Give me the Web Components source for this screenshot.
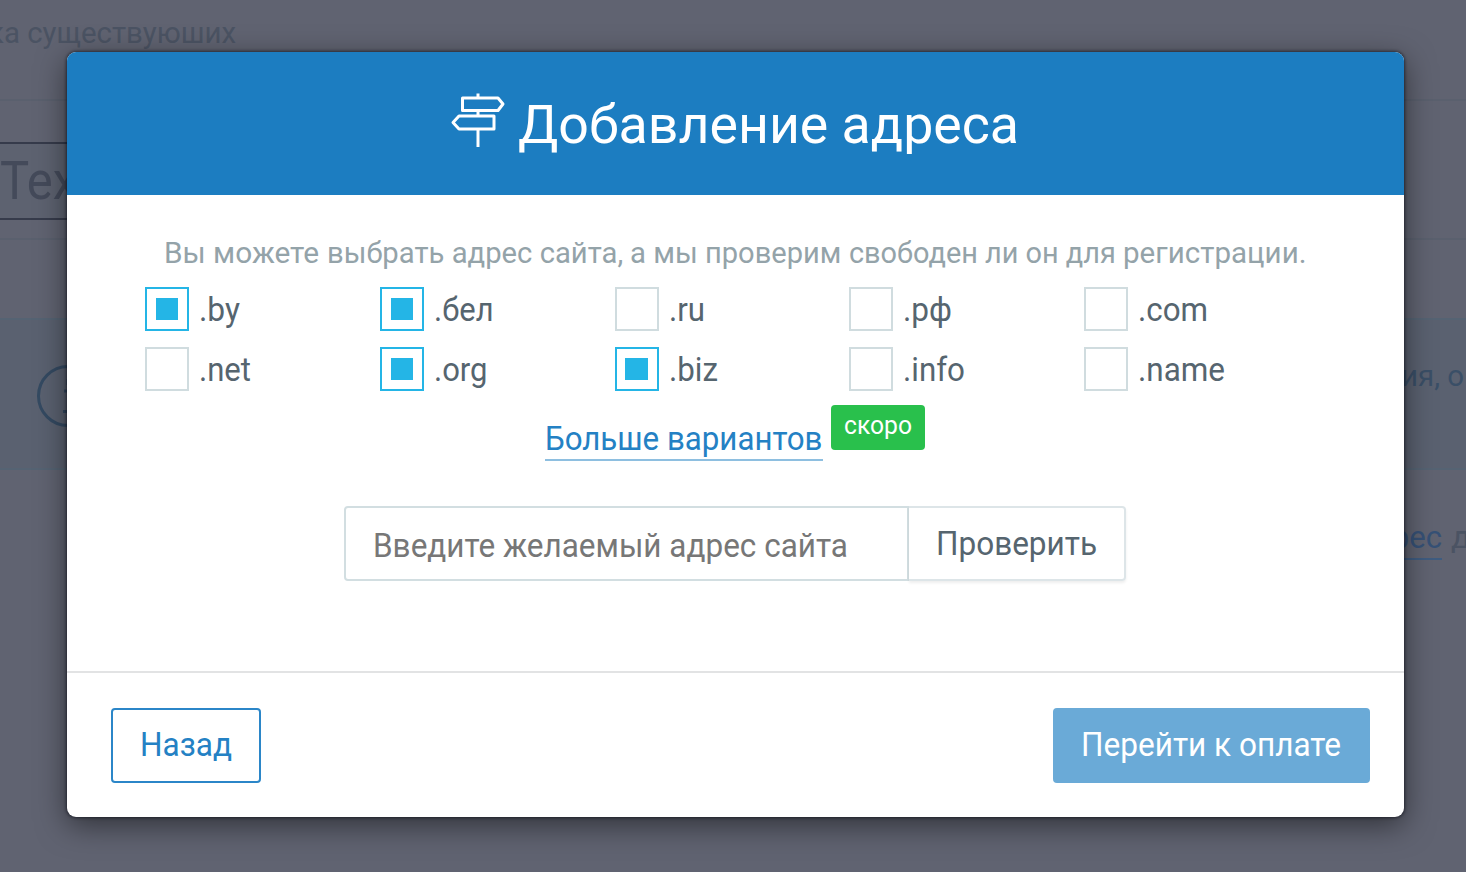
<!DOCTYPE html>
<html lang="ru">
<head>
<meta charset="utf-8">
<title>Добавление адреса</title>
<style>
html,body{margin:0;height:872px;overflow:hidden;background:#606371;font-family:Roboto,"Open Sans",sans-serif}
</style>
</head>
<body>
<address-app></address-app>
<script>
const define=(name,html,after)=>{
  customElements.define(name,class extends HTMLElement{
    connectedCallback(){
      if(this.shadowRoot)return;
      this.attachShadow({mode:'open'}).innerHTML=html;
      if(after)after(this,this.shadowRoot);
    }
  });
};

// A single line of text that takes exactly the width in its "w" attribute.
define('fit-text',`<style>
:host{display:inline-block;white-space:pre;flex:none}
span{display:inline-block;transform-origin:0 50%}
</style><span><slot></slot></span>`,(el,root)=>{
  const w=+el.getAttribute('w'),s=root.querySelector('span');
  el.style.width=w+'px';
  s.style.transform=`scaleX(${w/s.getBoundingClientRect().width})`;
});

define('sign-icon',`<style>:host{display:block;width:56px;height:56px}svg{display:block}</style>
<svg width="56" height="56" viewBox="450 92 56 56" fill="none" stroke="#fff" stroke-width="3" stroke-linejoin="round">
<path d="M478 93.5v4M478 111.5v4M478 130v17"/>
<path d="M462.5 98H498L503 104L498 110.5H462.5Z"/>
<path d="M494 116H459L453 122.5L459 129H494Z"/></svg>`);

define('zone-check',`<style>
:host{display:flex;align-items:center;gap:10px;height:44px;color:#56656f;font-size:34px;line-height:43px}
i{box-sizing:border-box;width:44px;height:44px;border:2px solid #d0dcdf;display:grid;place-items:center;flex:none}
:host([checked]) i{border-color:#24b5e6}
:host([checked]) i::before{content:"";width:22.5px;height:22.5px;background:#24b5e6}
fit-text{margin-top:-1px}
</style><i></i><slot></slot>`);

define('ui-button',`<style>
:host{box-sizing:border-box;display:flex;align-items:center;justify-content:center;height:75px;border:2px solid #2b86c8;border-radius:4px;color:#2481c4;font-size:33px;line-height:40px}
:host([kind=primary]){background:#6aaad7;border-color:#6aaad7;color:#fff}
</style><slot></slot>`);

define('search-field',`<style>
:host{display:flex;width:782px;height:75px;margin:44px 0 0 277.5px;font-size:33px;line-height:40px}
div{box-sizing:border-box;height:75px;border:2px solid #d2dee1;display:flex;align-items:center}
.f{width:565px;border-radius:4px 0 0 4px;padding:6px 0 0 27px;color:#777}
.b{width:217px;border-left:0;border-color:#dde5e8;border-radius:0 4px 4px 0;padding:2px 0 0 27px;color:#56656f;box-shadow:0 2px 3px rgba(0,0,0,.07)}
</style><div class="f"><fit-text w="475">Введите желаемый адрес сайта</fit-text></div><div class="b"><fit-text w="161">Проверить</fit-text></div>`);

define('address-dialog',`<style>
:host{display:flex;flex-direction:column;box-sizing:border-box;width:1337px;height:764.5px;background:#fff;border-radius:9px;overflow:hidden;box-shadow:0 8px 30px rgba(0,0,0,.5),0 0 3px 1px rgba(10,12,25,.55)}
header{height:143px;background:#1c7dc1;color:#fff;display:flex;box-sizing:border-box;padding:0 0 0 383.5px;gap:12px}
sign-icon{margin-top:40px}
h1{font-weight:400;font-size:53px;line-height:143px;margin:2px 0 0}
main{height:476px;border-bottom:2px solid #e2e3e4}
p{display:flex;margin:0;padding:38px 0 0 97.5px;height:40px;line-height:40px;font-size:29px;color:#94a3a9}
.zones{display:grid;grid-template-columns:repeat(5,234.8px);row-gap:16px;padding:14px 0 0 78.5px}
.more{display:flex;padding:14px 0 0 478.5px;gap:8.5px;height:56.5px}
a{display:block;box-sizing:border-box;height:42.5px;margin-top:13px;border-bottom:2px solid #8ebfe0;color:#2481c4;font-size:33px;line-height:41px}
b{font-weight:400;display:flex;justify-content:center;width:94px;height:45px;border-radius:4px;background:#29c04c;color:#fff;font-size:25px;line-height:42px}
footer{display:flex;justify-content:space-between;padding:34.5px 33.5px 0 44.5px}
.back{width:150px}.pay{width:317.5px}
</style>
<header><sign-icon></sign-icon><h1><fit-text w="501">Добавление адреса</fit-text></h1></header>
<main>
<p><fit-text w="162.5">Вы можете </fit-text><fit-text w="303.5">выбрать адрес сайта, </fit-text><fit-text w="75">а мы </fit-text><fit-text w="143.5">проверим </fit-text><fit-text w="274">свободен ли он для </fit-text><fit-text w="183.5">регистрации.</fit-text></p>
<div class="zones">
<zone-check checked><fit-text w="41">.by</fit-text></zone-check>
<zone-check checked><fit-text w="59.5">.бел</fit-text></zone-check>
<zone-check><fit-text w="36">.ru</fit-text></zone-check>
<zone-check><fit-text w="49">.рф</fit-text></zone-check>
<zone-check><fit-text w="70">.com</fit-text></zone-check>
<zone-check><fit-text w="52">.net</fit-text></zone-check>
<zone-check checked><fit-text w="53.5">.org</fit-text></zone-check>
<zone-check checked><fit-text w="49">.biz</fit-text></zone-check>
<zone-check><fit-text w="62">.info</fit-text></zone-check>
<zone-check><fit-text w="87">.name</fit-text></zone-check>
</div>
<div class="more"><a><fit-text w="277.5">Больше вариантов</fit-text></a><b><fit-text w="68">скоро</fit-text></b></div>
<search-field></search-field>
</main>
<footer><ui-button class="back"><fit-text w="92">Назад</fit-text></ui-button><ui-button class="pay" kind="primary"><fit-text w="260">Перейти к оплате</fit-text></ui-button></footer>`);

// The dimmed page under the dialog.
define('dimmed-page',`<style>
:host{display:block;width:1466px;height:872px;overflow:hidden;color:#4b5363}
div{box-sizing:border-box}
.top{height:101px;border-bottom:2px solid #5a606e;font-size:29px;line-height:36px;padding:15px 0 0 0}
.top fit-text{margin-left:-12px}
.box{width:700px;height:78px;margin-top:41px;border:2px solid #363b4b;border-left:0;border-right:0;background:#5d6270;font-size:53px;line-height:74px;color:#444a5a}
.rule{height:20px;border-bottom:2px solid #5a606e}
.info{height:152px;margin-top:78px;border:2px solid #556373;border-left:0;border-right:0;background:#5a6170;display:flex;justify-content:space-between;padding:44px 2px 0 36px;font-size:29px;line-height:24px;color:#3a4f67}
.link{display:flex;justify-content:flex-end;padding-top:47px;gap:9px;font-size:32px;line-height:40px;margin-right:-5px}
.link a{height:41px;border-bottom:2px solid #3f5c80;color:#365176}
</style>
<div class="top"><fit-text w="248">ка существуюших</fit-text></div>
<div class="box"><fit-text w="77">Тех</fit-text></div>
<div class="rule"></div>
<div class="info"><svg width="64" height="64" viewBox="36 364 64 64" fill="none" stroke="#344a62" stroke-width="3"><circle cx="68" cy="396" r="29.5"/><path d="M68 379v6M64 391h5v20M63 411.5h11"/></svg><fit-text w="63">ия, о</fit-text></div>
<div class="link"><a><fit-text w="86">адрес</fit-text></a><fit-text w="20">д</fit-text></div>`);

define('address-app',`<style>
:host{display:grid;width:1466px;height:872px;overflow:hidden}
dimmed-page,address-dialog{grid-area:1/1}
address-dialog{margin:52px 0 0 66.5px;z-index:1}
</style><dimmed-page></dimmed-page><address-dialog></address-dialog>`);
</script>
</body>
</html>
